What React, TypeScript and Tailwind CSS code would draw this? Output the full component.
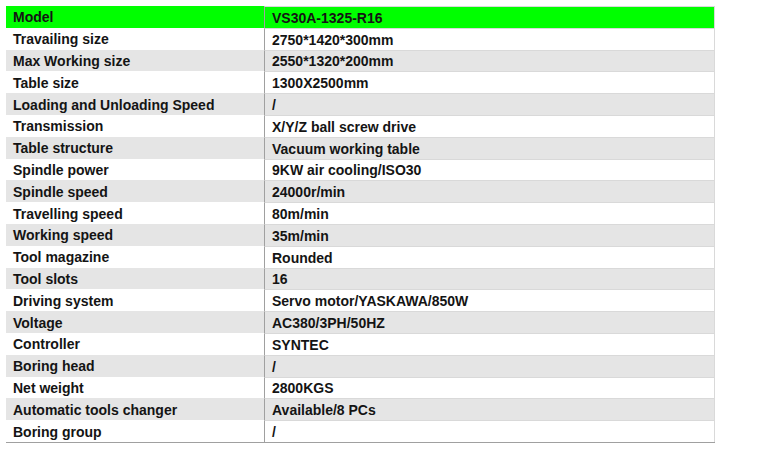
const rows: [string, string][] = [
  ['Model', 'VS30A-1325-R16'],
  ['Travailing size', '2750*1420*300mm'],
  ['Max Working size', '2550*1320*200mm'],
  ['Table size', '1300X2500mm'],
  ['Loading and Unloading Speed', '/'],
  ['Transmission', 'X/Y/Z ball screw drive'],
  ['Table structure', 'Vacuum working table'],
  ['Spindle power', '9KW air cooling/ISO30'],
  ['Spindle speed', '24000r/min'],
  ['Travelling speed', '80m/min'],
  ['Working speed', '35m/min'],
  ['Tool magazine', 'Rounded'],
  ['Tool slots', '16'],
  ['Driving system', 'Servo motor/YASKAWA/850W'],
  ['Voltage', 'AC380/3PH/50HZ'],
  ['Controller', 'SYNTEC'],
  ['Boring head', '/'],
  ['Net weight', '2800KGS'],
  ['Automatic tools changer', 'Available/8 PCs'],
  ['Boring group', '/'],
];

export default function App() {
  return (
    <div className="w-[762px] h-[455px] bg-white pt-[6px] pl-[6px] font-['Liberation_Sans',Arial,sans-serif] text-[14px] font-bold text-[#141414]">
      <div className="w-[709px] border-b border-[#a0a0a0]">
        {rows.map(([label, value], i) => {
          const bg = i === 0 ? 'bg-[#00ff00]' : i % 2 === 0 ? 'bg-[#e5e5e5]' : 'bg-white';
          return (
            <div key={label} className={`flex h-[21.8px] ${bg}`}>
              <div className="w-[258px] pl-[7px] pt-[1px] flex items-center leading-none">{label}</div>
              <div className="flex-1 pl-[7px] pt-[1px] flex items-center leading-none border-l border-l-[#a0a0a0] border-t border-t-[#d9d9d9] border-r border-r-[#d9d9d9]">
                {value}
              </div>
            </div>
          );
        })}
      </div>
    </div>
  );
}
